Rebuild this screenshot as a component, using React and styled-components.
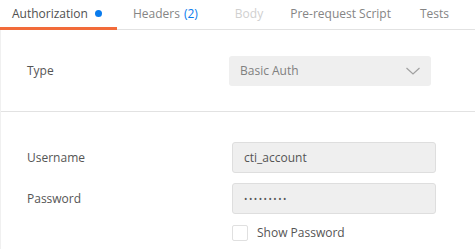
import React from 'react';
import styled, {createGlobalStyle} from 'styled-components';

const GlobalStyle = createGlobalStyle`
    html, body {
        margin: 0;
        padding: 0;
        background: #ffffff;
        font-family: "Open Sans", "Liberation Sans", sans-serif;
    }
`;

const Page = styled.div`
    width: 475px;
    height: 249px;
    overflow: hidden;
    background: #ffffff;
`;

const TabBar = styled.div`
    display: flex;
    height: 29px;
    border-bottom: 1px solid #e2e2e2;
`;

const Tab = styled.div`
    display: flex;
    align-items: center;
    padding: 0 ${props => props.pr || 12}px 0 ${props => props.pl || 12}px;
    font-size: 12px;
    color: ${props => props.active ? '#505050' : props.disabled ? '#d0d0d0' : '#858585'};
    white-space: nowrap;
    border-bottom: ${props => props.active ? '3px solid #f26b3a' : '3px solid transparent'};
    margin-bottom: -1px;
    box-sizing: border-box;
`;

const Dot = styled.span`
    display: inline-block;
    width: 7px;
    height: 7px;
    border-radius: 50%;
    background: #097bed;
    margin-left: 7px;
`;

const Count = styled.span`
    color: #097bed;
    margin-left: 4px;
`;

const Body = styled.div`
    border-left: 1px solid #f0f0f0;
    height: 219px;
`;

const TypeSection = styled.div`
    display: flex;
    align-items: center;
    height: 81px;
    border-bottom: 1px solid #e2e2e2;
    padding-left: 26px;
`;

const Label = styled.div`
    width: 202px;
    font-size: 12px;
    color: #555555;
`;

const Select = styled.div`
    display: flex;
    align-items: center;
    justify-content: space-between;
    width: 202px;
    height: 30px;
    box-sizing: border-box;
    padding: 0 10px 0 11px;
    background: #efefef;
    border-radius: 3px;
    font-size: 12px;
    color: #808080;
`;

const Form = styled.div`
    display: flex;
    flex-direction: column;
    gap: 10px;
    padding: 30px 0 0 26px;
`;

const Row = styled.div`
    display: flex;
    align-items: center;
`;

const FieldLabel = styled(Label)`
    width: 205px;
`;

const Input = styled.div`
    width: 204px;
    height: 31px;
    box-sizing: border-box;
    display: flex;
    align-items: center;
    padding-left: 11px;
    background: #efefef;
    border: 1px solid #dedede;
    border-radius: 3px;
    font-size: ${props => props.masked ? '9px' : '12px'};
    color: #555555;
    letter-spacing: ${props => props.masked ? '1.5px' : '0'};
`;

const Check = styled.div`
    width: 16px;
    height: 16px;
    box-sizing: border-box;
    border: 1px solid #e0e0e0;
    border-radius: 2px;
    background: #ffffff;
    margin-right: 9px;
`;

const CheckText = styled.div`
    font-size: 12px;
    color: #555555;
`;

const Chevron = () => (
    <svg width="16" height="8" viewBox="0 0 16 8">
        <path d="M1.5 1 L8 7 L14.5 1" fill="none" stroke="#a0a0a0" strokeWidth="1.2" />
    </svg>
);

export default function App() {
    return (
        <>
            <GlobalStyle />
            <Page>
                <TabBar>
                    <Tab active pr={15}>Authorization<Dot /></Tab>
                    <Tab pl={16}>Headers<Count>(2)</Count></Tab>
                    <Tab pl={25} disabled>Body</Tab>
                    <Tab pl={15}>Pre-request Script</Tab>
                    <Tab pl={17}>Tests</Tab>
                </TabBar>
                <Body>
                    <TypeSection>
                        <Label>Type</Label>
                        <Select>
                            <span>Basic Auth</span>
                            <Chevron />
                        </Select>
                    </TypeSection>
                    <Form>
                        <Row>
                            <FieldLabel>Username</FieldLabel>
                            <Input>cti_account</Input>
                        </Row>
                        <Row>
                            <FieldLabel>Password</FieldLabel>
                            <Input masked>•••••••••</Input>
                        </Row>
                        <Row>
                            <FieldLabel />
                            <Check />
                            <CheckText>Show Password</CheckText>
                        </Row>
                    </Form>
                </Body>
            </Page>
        </>
    );
}
